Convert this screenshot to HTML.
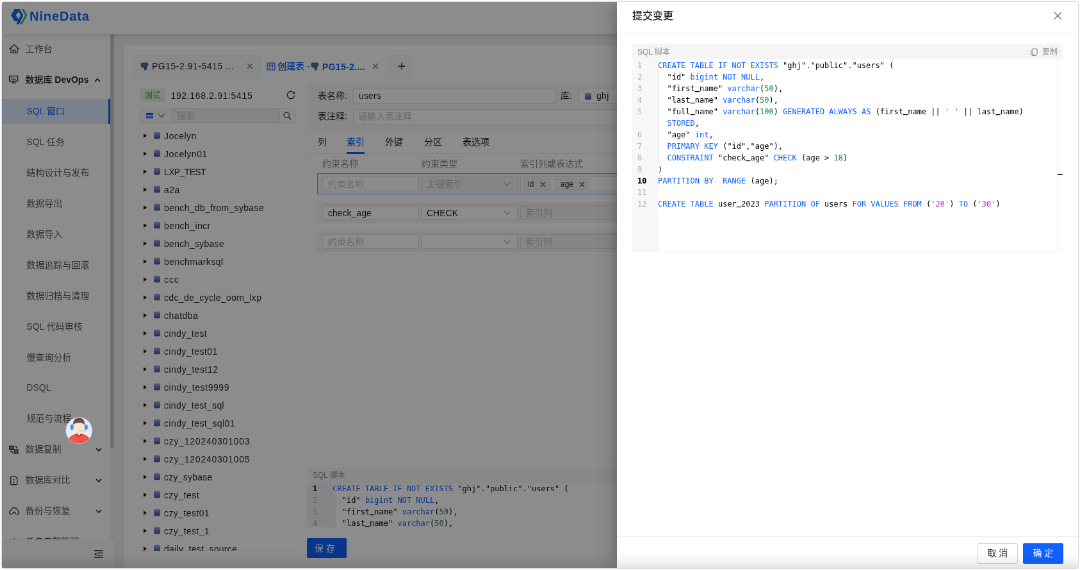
<!DOCTYPE html>
<html lang="zh-CN">
<head>
<meta charset="utf-8">
<title>NineData - 提交变更</title>
<style>
*{box-sizing:border-box;margin:0;padding:0}
html,body{width:1080px;height:570px;overflow:hidden;background:#fdfdfd}
body{font-family:"Liberation Sans","Noto Sans CJK SC",sans-serif;font-size:14px;color:rgba(0,0,0,.85);position:relative}
#frame{position:absolute;left:1px;top:1px;width:1078px;height:567.7px;border:1px solid #dedede;border-radius:2.5px;overflow:hidden;background:#fff}
#app{position:absolute;left:0;top:0;width:1680px;height:882px;transform:scale(.6405,.6413);transform-origin:0 0;will-change:transform;overflow:hidden;background:#eef0f4}
.abs{position:absolute}
#app div,#app span,#app svg{position:absolute;white-space:nowrap}
.t{line-height:22px;height:22px}
#app .i{position:static}
#app .u{position:relative;top:-1.7px;font-weight:bold}
/* header */
#hdr{left:0;top:0;width:1680px;height:50px;background:#fff;box-shadow:0 2px 8px rgba(0,0,0,.12);z-index:3}
/* sider */
#sider{left:0;top:50px;width:175px;height:832px;background:#fff;z-index:2}
.mi{left:37px;color:rgba(0,0,0,.65)}
.mi.b{font-weight:bold;color:rgba(0,0,0,.85)}
/* main */
#card{left:191px;top:68px;width:1489px;height:814px;background:#fff}
.row{left:221px}
#mask{left:0;top:0;width:1680px;height:882px;background:rgba(0,0,0,.45);z-index:10}
#drawer{left:960px;top:0;width:720px;height:882px;background:#fff;z-index:11;box-shadow:-6px 0 16px -8px rgba(0,0,0,.2),-9px 0 28px rgba(0,0,0,.14)}
#app .mono{font-family:"DejaVu Sans Mono","Liberation Mono",monospace;font-size:12px;line-height:18px;height:18px;color:#000;white-space:pre}
#app .mono span{white-space:inherit}
.k{color:#0f62fe}.n{color:#098658}.s{color:#d013d0}
.ln{color:#b0b0b0;text-align:right;width:30px}
</style>
</head>
<body>
<div id="frame">
<div id="app">
<div id="hdr">
<svg style="left:12px;top:8px" width="30" height="28" viewBox="12 8 30 28">
<path fill-rule="evenodd" d="M14 20.6 L19.5 11 L27.5 11 L33.2 20.6 L26.9 34.4 L22.3 34.4 L24.5 29.8 L19.3 29.8 Z M21.6 20.6 L23.6 17.2 L25.4 17.2 L24.6 15.6 L26.4 15 L29.2 20.6 L27.2 24.4 L26.4 26.4 L24.6 25.8 L25.2 24.4 L23.6 24.4 Z" fill="#1468fa"/>
<path d="M30.6 11 L33.8 11 L39.6 20.6 L31.4 34.4 L28.2 34.4 L36.2 20.6 Z" fill="#19c48a"/>
</svg>
<span style="left:43px;top:6.5px;font-size:20px;line-height:30px;font-weight:bold;color:#1468fa;letter-spacing:.9px">NineData</span>
<div style="left:59.1px;top:13.7px;width:3.7px;height:3px;background:#19c48a"></div>
</div>
<div id="sider">
<div style="left:0;top:101.3px;width:169px;height:39px;background:#dfeaff"></div>
<div style="left:166px;top:101.3px;width:3px;height:39px;background:#0f62fe"></div>
<span class="mi t" style="left:36.4px;top:12.1px">工作台</span>
<svg style="left:10.6px;top:15.0px" width="16" height="16" viewBox="0 0 16 16"><path d="M1 8 L8 1.5 L15 8 M3 6.8 V14.3 H13 V6.8 M6.3 14.3 V10 H9.7 V14.3" fill="none" stroke="#333" stroke-width="1.25" stroke-linejoin="round" stroke-linecap="round"/></svg>
<span class="mi t b" style="left:36.4px;top:60.1px"><span class="i" style="font-weight:500">数据库</span> DevOps</span>
<svg style="left:10.6px;top:63.05px" width="16" height="16" viewBox="0 0 16 16"><path d="M0.7 2.3 H13.5 V10.4 H0.7 Z M3.6 13.1 H10.6 M7.1 10.4 V13" fill="none" stroke="#222" stroke-width="1.35"/><path d="M3.6 4.8 V8 M5.4 5.2 H7.6 M5.4 7.6 H10.6 M9 5 V6.4" fill="none" stroke="#333" stroke-width="1"/></svg>
<span class="mi t" style="left:38.3px;top:109.4px;color:#0f62fe">SQL 窗口</span>
<span class="mi t" style="left:38.3px;top:157.29px">SQL 任务</span>
<span class="mi t" style="left:38.3px;top:205.18px">结构设计与发布</span>
<span class="mi t" style="left:38.3px;top:253.07px">数据导出</span>
<span class="mi t" style="left:38.3px;top:300.96px">数据导入</span>
<span class="mi t" style="left:38.3px;top:348.85px">数据追踪与回滚</span>
<span class="mi t" style="left:38.3px;top:396.74px">数据归档与清理</span>
<span class="mi t" style="left:38.3px;top:444.63px">SQL 代码审核</span>
<span class="mi t" style="left:38.3px;top:492.52px">慢查询分析</span>
<span class="mi t" style="left:38.3px;top:540.41px">DSQL</span>
<span class="mi t" style="left:38.3px;top:588.3px">规范与流程</span>
<span class="mi t" style="left:36.4px;top:636.19px">数据复制</span>
<svg style="left:10.6px;top:639.62px" width="16" height="16" viewBox="0 0 16 16"><path d="M0.8 2.4 H7 V7.4 H0.8 Z M8 8.2 H13.8 V13.8 H8 Z" fill="#8a8a8a" stroke="#2a2a2a" stroke-width="1.3"/><path d="M8.6 2.6 Q12.2 2.8 12.4 6.4 M2.2 9.6 L5.6 13.2" fill="none" stroke="#2a2a2a" stroke-width="1.4"/></svg>
<span class="mi t" style="left:36.4px;top:684.08px">数据库对比</span>
<svg style="left:10.6px;top:687.67px" width="16" height="16" viewBox="0 0 16 16"><path d="M2.6 3 Q2.6 1.8 3.8 1.8 H9.6 L12.6 4.6 V13.4 Q12.6 14.6 11.4 14.6 H3.8 Q2.6 14.6 2.6 13.4 Z M6.6 6.4 H8.4 M6.6 9.2 H8.4 M6.6 11.6 H8.4" fill="none" stroke="#2a2a2a" stroke-width="1.3" stroke-linejoin="round"/></svg>
<span class="mi t" style="left:36.4px;top:731.96px">备份与恢复</span>
<svg style="left:10.6px;top:735.72px" width="16" height="16" viewBox="0 0 16 16"><path d="M4.4 13 H3.8 A3.4 3.4 0 0 1 3 6.4 A5.2 5.2 0 0 1 13 6.4 A3.4 3.4 0 0 1 12.2 13 H11.6 M5.4 12 L8 9.2 L10.6 12" fill="none" stroke="#2a2a2a" stroke-width="1.3" stroke-linejoin="round"/></svg>
<span class="mi t" style="left:36.4px;top:779.85px">任务告警管理</span>
<svg style="left:10.6px;top:783.77px" width="16" height="16" viewBox="0 0 16 16"><path d="M3 13.5 H13 M4.5 13 V8.5 A3.5 3.5 0 0 1 11.5 8.5 V13 M8 2 V3.5 M2.5 4 L3.5 5 M13.5 4 L12.5 5" fill="none" stroke="#333" stroke-width="1.2"/></svg>
<svg style="left:144px;top:68px" width="10" height="8" viewBox="0 0 10 8"><path d="M1 6 L5 2 L9 6" fill="none" stroke="#222" stroke-width="1.6"/></svg>
<svg style="left:146px;top:644px" width="10" height="8" viewBox="0 0 10 8"><path d="M1 2 L5 6 L9 2" fill="none" stroke="#222" stroke-width="1.6"/></svg>
<svg style="left:146px;top:692px" width="10" height="8" viewBox="0 0 10 8"><path d="M1 2 L5 6 L9 2" fill="none" stroke="#222" stroke-width="1.6"/></svg>
<svg style="left:146px;top:740px" width="10" height="8" viewBox="0 0 10 8"><path d="M1 2 L5 6 L9 2" fill="none" stroke="#222" stroke-width="1.6"/></svg>
<div style="left:169px;top:0;width:6px;height:832px;background:#f1f1f1"></div>
<div style="left:169px;top:0;width:6px;height:646px;background:#c9c9c9;border-radius:3px"></div>
<div style="left:0;top:788px;width:175px;height:44px;background:#fafafa;border-top:1px solid #ececec"></div>
<svg style="left:142.6px;top:803.5px" width="15.5" height="14" viewBox="0 0 16 14"><path d="M1 1.5 H15 M6 5 H15 M6 9 H15 M1 12.5 H15" stroke="#222" stroke-width="1.3" fill="none"/><path d="M4.5 4.5 L1.5 7 L4.5 9.5 Z" fill="#222"/></svg>
</div>
<div id="card"></div>
<svg style="left:0;top:0" width="0" height="0"><defs><linearGradient id="dbg" x1="0" y1="0" x2="0" y2="1"><stop offset="0" stop-color="#a3b5e6"/><stop offset=".3" stop-color="#7d93d0"/><stop offset="1" stop-color="#3f5499"/></linearGradient></defs></svg>
<div style="left:207px;top:83px;width:197px;height:36px;background:#f9f9f9;border:1px solid #f4f4f4"></div>
<span class="t" style="left:234px;top:89.3px;letter-spacing:.5px">PG15-2.91-5415 ...</span>
<span class="t" style="left:430.3px;top:89.3px;color:#0f62fe;font-weight:500">创建表 - </span>
<span class="t" style="left:500px;top:90px;color:#0f62fe;font-weight:bold;letter-spacing:.3px">PG15-2....</span>
<div style="left:600px;top:83px;width:42px;height:36px;background:#f9f9f9;border:1px solid #f4f4f4"></div>
<svg style="left:215.6px;top:93.6px" width="13" height="13" viewBox="0 0 13 13"><path d="M0.6 2.2 Q0.6 0.4 3 0.4 H9.6 Q12.4 0.4 12.4 3 Q12.4 5.6 10.4 6.6 L9.6 11.2 Q9.4 12.4 8.2 12.4 H7 Q6 12.4 6 11.2 V8.4 H3.6 Q1.6 8.4 1.2 6.4 Z" fill="#336791"/><path d="M3 3 V5.4 M5.2 2.6 H7.4 V4.6 H5.2 M9.2 2.6 H10.6" stroke="#8fb0cc" stroke-width=".7" fill="none"/></svg>
<svg style="left:482px;top:93.6px" width="13" height="13" viewBox="0 0 13 13"><path d="M0.6 2.2 Q0.6 0.4 3 0.4 H9.6 Q12.4 0.4 12.4 3 Q12.4 5.6 10.4 6.6 L9.6 11.2 Q9.4 12.4 8.2 12.4 H7 Q6 12.4 6 11.2 V8.4 H3.6 Q1.6 8.4 1.2 6.4 Z" fill="#336791"/><path d="M3 3 V5.4 M5.2 2.6 H7.4 V4.6 H5.2 M9.2 2.6 H10.6" stroke="#8fb0cc" stroke-width=".7" fill="none"/></svg>
<svg style="left:382px;top:94.6px" width="10" height="10" viewBox="0 0 10 10"><path d="M1 1 L9 9 M9 1 L1 9" stroke="#777" stroke-width="1.15" fill="none"/></svg>
<svg style="left:578px;top:94.6px" width="10" height="10" viewBox="0 0 10 10"><path d="M1 1 L9 9 M9 1 L1 9" stroke="#777" stroke-width="1.15" fill="none"/></svg>
<svg style="left:618px;top:94px" width="12" height="12" viewBox="0 0 12 12"><path d="M6 0.5 V11.5 M0.5 6 H11.5" stroke="#222" stroke-width="1.3"/></svg>
<svg style="left:412.5px;top:93.5px" width="14" height="13" viewBox="0 0 14 13"><path d="M1 1 H13 V12 H1 Z M1 4.5 H13 M5 1 V12 M9 1 V12" fill="none" stroke="#0f62fe" stroke-width="1.2"/></svg>
<div style="left:207px;top:126px;width:260px;height:730px;background:#fff;border:1px solid #f0f0f0"></div>
<div style="left:215px;top:135px;width:39.5px;height:21px;background:#e6f6e0;border-radius:2px"></div>
<span style="left:222.7px;top:136.3px;font-size:12px;line-height:20px;color:#3c9e3c">测试</span>
<span class="t" style="left:263.5px;top:134.5px;letter-spacing:.65px">192.168.2.91:5415</span>
<svg style="left:444px;top:138px" width="14" height="14" viewBox="0 0 14 14"><path d="M11.6 3.6 A5.7 5.7 0 1 0 12.7 7.6" fill="none" stroke="#333" stroke-width="1.25"/><path d="M12.4 1.8 V4.4 H9.8" fill="none" stroke="#333" stroke-width="1.1"/></svg>
<div style="left:214.5px;top:164.5px;width:52.5px;height:24px;background:#fafafa;border:1px solid #e0e0e0;border-radius:2px 0 0 2px"></div>
<div style="left:266px;top:164.5px;width:168px;height:24px;background:#f3f3f3;border:1px solid #e0e0e0"></div>
<div style="left:433px;top:164.5px;width:25px;height:24px;background:#fafafa;border:1px solid #e0e0e0;border-radius:0 2px 2px 0"></div>
<svg style="left:225px;top:171.5px" width="11" height="10.4" viewBox="0 0 13 12" preserveAspectRatio="none"><path d="M0 1 H13 V5 H0 Z" fill="#2a62e8"/><path d="M0 7 H13 V11 H0 Z" fill="#4c86ff"/></svg>
<svg style="left:243px;top:172.5px" width="12" height="8" viewBox="0 0 12 8"><path d="M1 1 L6 6.5 L11 1" fill="none" stroke="#888" stroke-width="1.2"/></svg>
<span class="t" style="left:273.2px;top:165.5px;color:#bfbfbf">搜索</span>
<svg style="left:439px;top:170.5px" width="13" height="13" viewBox="0 0 13 13"><circle cx="5.3" cy="5.3" r="4.2" fill="none" stroke="#555" stroke-width="1.3"/><path d="M8.4 8.4 L12.2 12.2" stroke="#555" stroke-width="1.5"/></svg>
<div style="left:207px;top:190px;width:260px;height:666px;overflow:hidden">
<svg style="left:13.7px;top:14.8px" width="5" height="7.2" viewBox="0 0 6 8"><path d="M0 0 L6 4 L0 8 Z" fill="#111"/></svg>
<svg style="left:30px;top:12.3px" width="10" height="12" viewBox="0 0 10 12"><path d="M0 1.6 Q5 -0.6 10 1.6 V10.4 Q5 12.6 0 10.4 Z" fill="url(#dbg)"/></svg>
<span class="t tr" style="left:46px;top:7.9px;letter-spacing:0.47px">Jocelyn</span>
<svg style="left:13.7px;top:42.8px" width="5" height="7.2" viewBox="0 0 6 8"><path d="M0 0 L6 4 L0 8 Z" fill="#111"/></svg>
<svg style="left:30px;top:40.3px" width="10" height="12" viewBox="0 0 10 12"><path d="M0 1.6 Q5 -0.6 10 1.6 V10.4 Q5 12.6 0 10.4 Z" fill="url(#dbg)"/></svg>
<span class="t tr" style="left:46px;top:35.9px;letter-spacing:0.53px">Jocelyn01</span>
<svg style="left:13.7px;top:70.8px" width="5" height="7.2" viewBox="0 0 6 8"><path d="M0 0 L6 4 L0 8 Z" fill="#111"/></svg>
<svg style="left:30px;top:68.3px" width="10" height="12" viewBox="0 0 10 12"><path d="M0 1.6 Q5 -0.6 10 1.6 V10.4 Q5 12.6 0 10.4 Z" fill="url(#dbg)"/></svg>
<span class="t tr" style="left:46px;top:63.9px;letter-spacing:-0.63px">LXP_TEST</span>
<svg style="left:13.7px;top:98.8px" width="5" height="7.2" viewBox="0 0 6 8"><path d="M0 0 L6 4 L0 8 Z" fill="#111"/></svg>
<svg style="left:30px;top:96.3px" width="10" height="12" viewBox="0 0 10 12"><path d="M0 1.6 Q5 -0.6 10 1.6 V10.4 Q5 12.6 0 10.4 Z" fill="url(#dbg)"/></svg>
<span class="t tr" style="left:46px;top:91.9px;letter-spacing:0.35px">a2a</span>
<svg style="left:13.7px;top:126.8px" width="5" height="7.2" viewBox="0 0 6 8"><path d="M0 0 L6 4 L0 8 Z" fill="#111"/></svg>
<svg style="left:30px;top:124.3px" width="10" height="12" viewBox="0 0 10 12"><path d="M0 1.6 Q5 -0.6 10 1.6 V10.4 Q5 12.6 0 10.4 Z" fill="url(#dbg)"/></svg>
<span class="t tr" style="left:46px;top:119.9px;letter-spacing:0.32px">bench_db_from_sybase</span>
<svg style="left:13.7px;top:154.8px" width="5" height="7.2" viewBox="0 0 6 8"><path d="M0 0 L6 4 L0 8 Z" fill="#111"/></svg>
<svg style="left:30px;top:152.3px" width="10" height="12" viewBox="0 0 10 12"><path d="M0 1.6 Q5 -0.6 10 1.6 V10.4 Q5 12.6 0 10.4 Z" fill="url(#dbg)"/></svg>
<span class="t tr" style="left:46px;top:147.9px;letter-spacing:0.41px">bench_incr</span>
<svg style="left:13.7px;top:182.8px" width="5" height="7.2" viewBox="0 0 6 8"><path d="M0 0 L6 4 L0 8 Z" fill="#111"/></svg>
<svg style="left:30px;top:180.3px" width="10" height="12" viewBox="0 0 10 12"><path d="M0 1.6 Q5 -0.6 10 1.6 V10.4 Q5 12.6 0 10.4 Z" fill="url(#dbg)"/></svg>
<span class="t tr" style="left:46px;top:175.9px;letter-spacing:0.31px">bench_sybase</span>
<svg style="left:13.7px;top:210.8px" width="5" height="7.2" viewBox="0 0 6 8"><path d="M0 0 L6 4 L0 8 Z" fill="#111"/></svg>
<svg style="left:30px;top:208.3px" width="10" height="12" viewBox="0 0 10 12"><path d="M0 1.6 Q5 -0.6 10 1.6 V10.4 Q5 12.6 0 10.4 Z" fill="url(#dbg)"/></svg>
<span class="t tr" style="left:46px;top:203.9px;letter-spacing:0.44px">benchmarksql</span>
<svg style="left:13.7px;top:238.8px" width="5" height="7.2" viewBox="0 0 6 8"><path d="M0 0 L6 4 L0 8 Z" fill="#111"/></svg>
<svg style="left:30px;top:236.3px" width="10" height="12" viewBox="0 0 10 12"><path d="M0 1.6 Q5 -0.6 10 1.6 V10.4 Q5 12.6 0 10.4 Z" fill="url(#dbg)"/></svg>
<span class="t tr" style="left:46px;top:231.9px;letter-spacing:1.06px">ccc</span>
<svg style="left:13.7px;top:266.8px" width="5" height="7.2" viewBox="0 0 6 8"><path d="M0 0 L6 4 L0 8 Z" fill="#111"/></svg>
<svg style="left:30px;top:264.3px" width="10" height="12" viewBox="0 0 10 12"><path d="M0 1.6 Q5 -0.6 10 1.6 V10.4 Q5 12.6 0 10.4 Z" fill="url(#dbg)"/></svg>
<span class="t tr" style="left:46px;top:259.9px;letter-spacing:0.34px">cdc_de_cycle_oom_lxp</span>
<svg style="left:13.7px;top:294.8px" width="5" height="7.2" viewBox="0 0 6 8"><path d="M0 0 L6 4 L0 8 Z" fill="#111"/></svg>
<svg style="left:30px;top:292.3px" width="10" height="12" viewBox="0 0 10 12"><path d="M0 1.6 Q5 -0.6 10 1.6 V10.4 Q5 12.6 0 10.4 Z" fill="url(#dbg)"/></svg>
<span class="t tr" style="left:46px;top:287.9px;letter-spacing:0.52px">chatdba</span>
<svg style="left:13.7px;top:322.8px" width="5" height="7.2" viewBox="0 0 6 8"><path d="M0 0 L6 4 L0 8 Z" fill="#111"/></svg>
<svg style="left:30px;top:320.3px" width="10" height="12" viewBox="0 0 10 12"><path d="M0 1.6 Q5 -0.6 10 1.6 V10.4 Q5 12.6 0 10.4 Z" fill="url(#dbg)"/></svg>
<span class="t tr" style="left:46px;top:315.9px;letter-spacing:0.39px">cindy_test</span>
<svg style="left:13.7px;top:350.8px" width="5" height="7.2" viewBox="0 0 6 8"><path d="M0 0 L6 4 L0 8 Z" fill="#111"/></svg>
<svg style="left:30px;top:348.3px" width="10" height="12" viewBox="0 0 10 12"><path d="M0 1.6 Q5 -0.6 10 1.6 V10.4 Q5 12.6 0 10.4 Z" fill="url(#dbg)"/></svg>
<span class="t tr" style="left:46px;top:343.9px;letter-spacing:0.42px">cindy_test01</span>
<svg style="left:13.7px;top:378.8px" width="5" height="7.2" viewBox="0 0 6 8"><path d="M0 0 L6 4 L0 8 Z" fill="#111"/></svg>
<svg style="left:30px;top:376.3px" width="10" height="12" viewBox="0 0 10 12"><path d="M0 1.6 Q5 -0.6 10 1.6 V10.4 Q5 12.6 0 10.4 Z" fill="url(#dbg)"/></svg>
<span class="t tr" style="left:46px;top:371.9px;letter-spacing:0.49px">cindy_test12</span>
<svg style="left:13.7px;top:406.8px" width="5" height="7.2" viewBox="0 0 6 8"><path d="M0 0 L6 4 L0 8 Z" fill="#111"/></svg>
<svg style="left:30px;top:404.3px" width="10" height="12" viewBox="0 0 10 12"><path d="M0 1.6 Q5 -0.6 10 1.6 V10.4 Q5 12.6 0 10.4 Z" fill="url(#dbg)"/></svg>
<span class="t tr" style="left:46px;top:399.9px;letter-spacing:0.56px">cindy_test9999</span>
<svg style="left:13.7px;top:434.8px" width="5" height="7.2" viewBox="0 0 6 8"><path d="M0 0 L6 4 L0 8 Z" fill="#111"/></svg>
<svg style="left:30px;top:432.3px" width="10" height="12" viewBox="0 0 10 12"><path d="M0 1.6 Q5 -0.6 10 1.6 V10.4 Q5 12.6 0 10.4 Z" fill="url(#dbg)"/></svg>
<span class="t tr" style="left:46px;top:427.9px;letter-spacing:0.38px">cindy_test_sql</span>
<svg style="left:13.7px;top:462.8px" width="5" height="7.2" viewBox="0 0 6 8"><path d="M0 0 L6 4 L0 8 Z" fill="#111"/></svg>
<svg style="left:30px;top:460.3px" width="10" height="12" viewBox="0 0 10 12"><path d="M0 1.6 Q5 -0.6 10 1.6 V10.4 Q5 12.6 0 10.4 Z" fill="url(#dbg)"/></svg>
<span class="t tr" style="left:46px;top:455.9px;letter-spacing:0.41px">cindy_test_sql01</span>
<svg style="left:13.7px;top:490.8px" width="5" height="7.2" viewBox="0 0 6 8"><path d="M0 0 L6 4 L0 8 Z" fill="#111"/></svg>
<svg style="left:30px;top:488.3px" width="10" height="12" viewBox="0 0 10 12"><path d="M0 1.6 Q5 -0.6 10 1.6 V10.4 Q5 12.6 0 10.4 Z" fill="url(#dbg)"/></svg>
<span class="t tr" style="left:46px;top:483.9px;letter-spacing:0.75px">czy_120240301003</span>
<svg style="left:13.7px;top:518.8px" width="5" height="7.2" viewBox="0 0 6 8"><path d="M0 0 L6 4 L0 8 Z" fill="#111"/></svg>
<svg style="left:30px;top:516.3px" width="10" height="12" viewBox="0 0 10 12"><path d="M0 1.6 Q5 -0.6 10 1.6 V10.4 Q5 12.6 0 10.4 Z" fill="url(#dbg)"/></svg>
<span class="t tr" style="left:46px;top:511.9px;letter-spacing:0.75px">czy_120240301005</span>
<svg style="left:13.7px;top:546.8px" width="5" height="7.2" viewBox="0 0 6 8"><path d="M0 0 L6 4 L0 8 Z" fill="#111"/></svg>
<svg style="left:30px;top:544.3px" width="10" height="12" viewBox="0 0 10 12"><path d="M0 1.6 Q5 -0.6 10 1.6 V10.4 Q5 12.6 0 10.4 Z" fill="url(#dbg)"/></svg>
<span class="t tr" style="left:46px;top:539.9px;letter-spacing:0.24px">czy_sybase</span>
<svg style="left:13.7px;top:574.8px" width="5" height="7.2" viewBox="0 0 6 8"><path d="M0 0 L6 4 L0 8 Z" fill="#111"/></svg>
<svg style="left:30px;top:572.3px" width="10" height="12" viewBox="0 0 10 12"><path d="M0 1.6 Q5 -0.6 10 1.6 V10.4 Q5 12.6 0 10.4 Z" fill="url(#dbg)"/></svg>
<span class="t tr" style="left:46px;top:567.9px;letter-spacing:0.47px">czy_test</span>
<svg style="left:13.7px;top:602.8px" width="5" height="7.2" viewBox="0 0 6 8"><path d="M0 0 L6 4 L0 8 Z" fill="#111"/></svg>
<svg style="left:30px;top:600.3px" width="10" height="12" viewBox="0 0 10 12"><path d="M0 1.6 Q5 -0.6 10 1.6 V10.4 Q5 12.6 0 10.4 Z" fill="url(#dbg)"/></svg>
<span class="t tr" style="left:46px;top:595.9px;letter-spacing:0.41px">czy_test01</span>
<svg style="left:13.7px;top:630.8px" width="5" height="7.2" viewBox="0 0 6 8"><path d="M0 0 L6 4 L0 8 Z" fill="#111"/></svg>
<svg style="left:30px;top:628.3px" width="10" height="12" viewBox="0 0 10 12"><path d="M0 1.6 Q5 -0.6 10 1.6 V10.4 Q5 12.6 0 10.4 Z" fill="url(#dbg)"/></svg>
<span class="t tr" style="left:46px;top:623.9px;letter-spacing:0.41px">czy_test_1</span>
<svg style="left:13.7px;top:658.8px" width="5" height="7.2" viewBox="0 0 6 8"><path d="M0 0 L6 4 L0 8 Z" fill="#111"/></svg>
<svg style="left:30px;top:656.3px" width="10" height="12" viewBox="0 0 10 12"><path d="M0 1.6 Q5 -0.6 10 1.6 V10.4 Q5 12.6 0 10.4 Z" fill="url(#dbg)"/></svg>
<span class="t tr" style="left:46px;top:651.9px;letter-spacing:0.31px">daily_test_source</span>
</div>
<div style="left:477px;top:126px;width:1203px;height:590px;background:#fff;border:1px solid #f5f5f5"></div>
<div style="left:477px;top:126px;width:1203px;height:74px;background:#f7f7f7"></div>
<span class="t" style="left:493px;top:134.8px">表名称:</span>
<div style="left:548px;top:135px;width:316px;height:24px;background:#fff;border:1px solid #e0e0e0;border-radius:2px"></div>
<span class="t" style="left:557px;top:134.8px;letter-spacing:.15px">users</span>
<span class="t" style="left:872px;top:134.8px">库:</span>
<div style="left:900px;top:135px;width:400px;height:24px;background:#fff;border:1px solid #e0e0e0;border-radius:2px"></div>
<svg style="left:910px;top:140.6px" width="10" height="12" viewBox="0 0 10 12"><path d="M0 1.6 Q5 -0.6 10 1.6 V10.4 Q5 12.6 0 10.4 Z" fill="url(#dbg)"/></svg>
<span class="t" style="left:928px;top:134.8px;letter-spacing:.3px">ghj</span>
<span class="t" style="left:493px;top:166.8px">表注释:</span>
<div style="left:548px;top:167px;width:1000px;height:24px;background:#fff;border:1px solid #e0e0e0;border-radius:2px"></div>
<span class="t" style="left:556px;top:166.8px;color:#bfbfbf">请输入表注释</span>
<span class="t" style="left:493px;top:206.8px">列</span>
<span class="t" style="left:538px;top:206.8px;color:#0f62fe;font-weight:500">索引</span>
<span class="t" style="left:598px;top:206.8px">外键</span>
<span class="t" style="left:659px;top:206.8px">分区</span>
<span class="t" style="left:719px;top:206.8px">表选项</span>
<div style="left:477px;top:236px;width:1203px;height:1px;background:#efefef"></div>
<div style="left:538px;top:234px;width:28px;height:3px;background:#0f62fe"></div>
<span class="t" style="left:500px;top:241px;color:rgba(0,0,0,.45)">约束名称</span>
<span class="t" style="left:655px;top:241px;color:rgba(0,0,0,.45)">约束类型</span>
<span class="t" style="left:809px;top:241px;color:rgba(0,0,0,.45)">索引列或表达式</span>
<div style="left:492px;top:267px;width:1188px;height:33px;background:#f0f6ff;border:1px solid #6ea0ff"></div>
<div style="left:501px;top:272px;width:150px;height:23px;background:#fff;border:1px solid #e0e0e0;border-radius:2px"></div>
<span class="t" style="left:509px;top:273px;color:#bfbfbf">约束名称</span>
<div style="left:655px;top:272px;width:150px;height:23px;background:#f5f5f5;border:1px solid #e0e0e0;border-radius:2px"></div>
<span class="t" style="left:663px;top:273px;color:#b8b8b8">主键索引</span>
<svg style="left:783px;top:280px" width="12" height="8" viewBox="0 0 12 8"><path d="M1 1 L6 6.5 L11 1" fill="none" stroke="#b0b0b0" stroke-width="1.2"/></svg>
<div style="left:809px;top:272px;width:871px;height:23px;background:#fff;border:1px solid #e0e0e0;border-radius:2px"></div>
<div style="left:813px;top:275px;width:44px;height:18px;background:#f5f5f5;border:1px solid #e8e8e8;border-radius:2px"></div>
<span style="left:821px;top:275px;font-size:12px;line-height:18px">id</span>
<svg style="left:839.5px;top:279.5px" width="9" height="9" viewBox="0 0 10 10"><path d="M1 1 L9 9 M9 1 L1 9" stroke="#333" stroke-width="1.3" fill="none"/></svg>
<div style="left:864px;top:275px;width:53px;height:18px;background:#f5f5f5;border:1px solid #e8e8e8;border-radius:2px"></div>
<span style="left:872px;top:275px;font-size:12px;line-height:18px">age</span>
<svg style="left:900.5px;top:279.5px" width="9" height="9" viewBox="0 0 10 10"><path d="M1 1 L9 9 M9 1 L1 9" stroke="#333" stroke-width="1.3" fill="none"/></svg>
<div style="left:492px;top:312px;width:1188px;height:33px;background:#f5f6f8"></div>
<div style="left:501px;top:317px;width:150px;height:23px;background:#fff;border:1px solid #e0e0e0;border-radius:2px"></div>
<span class="t" style="left:509px;top:318px;color:rgba(0,0,0,.85)">check_age</span>
<div style="left:655px;top:317px;width:150px;height:23px;background:#fff;border:1px solid #e0e0e0;border-radius:2px"></div>
<span class="t" style="left:663px;top:318px;color:rgba(0,0,0,.85)">CHECK</span>
<svg style="left:783px;top:325px" width="12" height="8" viewBox="0 0 12 8"><path d="M1 1 L6 6.5 L11 1" fill="none" stroke="#b5b5b5" stroke-width="1.2"/></svg>
<div style="left:809px;top:317px;width:871px;height:23px;background:#f5f5f5;border:1px solid #e0e0e0;border-radius:2px"></div>
<span class="t" style="left:817px;top:318px;color:#bfbfbf">索引列</span>
<div style="left:492px;top:357px;width:1188px;height:33px;background:#f5f6f8"></div>
<div style="left:501px;top:362px;width:150px;height:23px;background:#fff;border:1px solid #e0e0e0;border-radius:2px"></div>
<span class="t" style="left:509px;top:363px;color:#bfbfbf">约束名称</span>
<div style="left:655px;top:362px;width:150px;height:23px;background:#fff;border:1px solid #e0e0e0;border-radius:2px"></div>
<svg style="left:783px;top:370px" width="12" height="8" viewBox="0 0 12 8"><path d="M1 1 L6 6.5 L11 1" fill="none" stroke="#b5b5b5" stroke-width="1.2"/></svg>
<div style="left:809px;top:362px;width:871px;height:23px;background:#f5f5f5;border:1px solid #e0e0e0;border-radius:2px"></div>
<span class="t" style="left:817px;top:363px;color:#bfbfbf">索引列</span>
<div style="left:477px;top:726px;width:1203px;height:93px;background:#fff"></div>
<div style="left:477px;top:726.5px;width:1203px;height:24.5px;background:#f8f8f8"></div>
<div style="left:477px;top:751px;width:40px;height:68px;background:#f2f2f2"></div>
<span style="left:485px;top:729px;font-size:12px;line-height:18px;color:rgba(0,0,0,.45)">SQL 脚本</span>
<div style="left:477px;top:749px;width:1203px;height:71.5px;overflow:hidden">
<span class="mono" style="left:8px;top:0.8px;color:#000;font-weight:bold">1</span>
<span class="mono" style="left:39.3px;top:0.8px"><span class="k" style="position:static">CREATE TABLE IF NOT EXISTS</span> "ghj"."public"."users" (</span>
<span class="mono" style="left:8px;top:18.8px;color:#b0b0b0">2</span>
<span class="mono" style="left:39.3px;top:18.8px">  "id" <span class="k" style="position:static">bigint NOT NULL</span>,</span>
<span class="mono" style="left:8px;top:36.8px;color:#b0b0b0">3</span>
<span class="mono" style="left:39.3px;top:36.8px">  "first<span class="u">_</span>name" <span class="k" style="position:static">varchar</span>(<span class="n" style="position:static">50</span>),</span>
<span class="mono" style="left:8px;top:54.8px;color:#b0b0b0">4</span>
<span class="mono" style="left:39.3px;top:54.8px">  "last<span class="u">_</span>name" <span class="k" style="position:static">varchar</span>(<span class="n" style="position:static">50</span>),</span>
<div style="left:40.5px;top:20px;width:1.3px;height:60px;background:#b8b8b8"></div>
</div>
<div style="left:476px;top:835.8px;width:62px;height:31.5px;background:#0f62fe;border-radius:2px"></div>
<span class="t" style="left:488px;top:840.5px;color:#fff;letter-spacing:0">保 存</span>
<div id="mask"></div>
<svg style="left:99.2px;top:646.6px;z-index:12" width="42.4" height="42.4" viewBox="-0.5 -0.5 43 43">
<defs><clipPath id="avc"><circle cx="21" cy="21" r="20.6"/></clipPath></defs>
<circle cx="21" cy="21" r="21.4" fill="#c9d3df" fill-opacity=".55"/><circle cx="21" cy="21" r="20.6" fill="#e4ecf6"/>
<g clip-path="url(#avc)">
<ellipse cx="21.2" cy="36" rx="16.7" ry="9.8" fill="#ef5350"/>
<path d="M14.6 27.2 L21 31.5 L27.2 27.2 L24 25.5 L18 25.5 Z" fill="#c62f2b"/>
<path d="M18 22 H24 V26 L21 29.4 L18 26 Z" fill="#fbdcb8"/>
<ellipse cx="20.7" cy="15.4" rx="8.6" ry="7.9" fill="#fde6c8"/>
<path d="M11.7 12.4 Q11.2 1 20.8 1 Q30.4 1 29.9 12.4 Q26.5 8.2 20.8 8.8 Q15.4 8.2 11.7 12.4 Z" fill="#6d4c41"/>
<ellipse cx="9.8" cy="15.8" rx="2.6" ry="4.3" fill="#3d8bfd"/>
<ellipse cx="32.2" cy="15.8" rx="2.6" ry="4.3" fill="#3d8bfd"/>
<path d="M20.4 21.4 L31 21.9 L32 19.5" fill="none" stroke="#b4bcc8" stroke-width="1"/>
</g></svg>
<div id="drawer">
<span style="left:24px;top:11.4px;font-size:16px;line-height:22px;font-weight:500;color:rgba(0,0,0,.88)">提交变更</span>
<svg style="left:682.3px;top:15.2px" width="12.6" height="12.6" viewBox="0 0 14 14"><path d="M1 1 L13 13 M13 1 L1 13" stroke="#777" stroke-width="1.5" fill="none"/></svg>
<div style="left:0;top:49px;width:720px;height:1px;background:#efefef"></div>
<div style="left:24px;top:65px;width:672px;height:24px;background:#f5f5f5"></div>
<span style="left:32px;top:69.3px;font-size:12px;line-height:18px;color:rgba(0,0,0,.45)">SQL 脚本</span>
<svg style="left:646px;top:72.3px" width="11" height="12" viewBox="0 0 11 12"><path d="M3 1 H10 V9.5 L7.5 11.5 H3 Z" fill="none" stroke="#888" stroke-width="1.1"/><path d="M1 3 V10.5 H6" fill="none" stroke="#888" stroke-width="1.1"/></svg>
<span style="left:664px;top:69.3px;font-size:12px;line-height:18px;color:rgba(0,0,0,.45)">复制</span>
<div style="left:24px;top:89px;width:672px;height:301px;background:#fff;border-bottom:1px solid #f0f0f0"></div>
<div style="left:24px;top:89px;width:40px;height:300px;background:#f7f7f7"></div>
<div style="left:688px;top:89px;width:8px;height:300px;border-left:1px solid #e8e8e8"></div>
<div style="left:688px;top:268px;width:8px;height:2px;background:#333"></div>
<span class="mono" style="left:32px;top:90px;color:#b0b0b0">1</span>
<span class="mono" style="left:64px;top:90px"><span class="k" style="position:static">CREATE TABLE IF NOT EXISTS</span> "ghj"."public"."users" (</span>
<span class="mono" style="left:32px;top:108px;color:#b0b0b0">2</span>
<span class="mono" style="left:64px;top:108px">  "id" <span class="k" style="position:static">bigint NOT NULL</span>,</span>
<span class="mono" style="left:32px;top:126px;color:#b0b0b0">3</span>
<span class="mono" style="left:64px;top:126px">  "first<span class="u">_</span>name" <span class="k" style="position:static">varchar</span>(<span class="n" style="position:static">50</span>),</span>
<span class="mono" style="left:32px;top:144px;color:#b0b0b0">4</span>
<span class="mono" style="left:64px;top:144px">  "last<span class="u">_</span>name" <span class="k" style="position:static">varchar</span>(<span class="n" style="position:static">50</span>),</span>
<span class="mono" style="left:32px;top:162px;color:#b0b0b0">5</span>
<span class="mono" style="left:64px;top:162px">  "full<span class="u">_</span>name" <span class="k" style="position:static">varchar</span>(<span class="n" style="position:static">100</span>) <span class="k" style="position:static">GENERATED ALWAYS AS</span> (first<span class="u">_</span>name || <span class="s" style="position:static">' '</span> || last<span class="u">_</span>name)</span>
<span class="mono" style="left:64px;top:180px">  <span class="k" style="position:static">STORED</span>,</span>
<span class="mono" style="left:32px;top:198px;color:#b0b0b0">6</span>
<span class="mono" style="left:64px;top:198px">  "age" <span class="k" style="position:static">int</span>,</span>
<span class="mono" style="left:32px;top:216px;color:#b0b0b0">7</span>
<span class="mono" style="left:64px;top:216px">  <span class="k" style="position:static">PRIMARY KEY</span> ("id","age"),</span>
<span class="mono" style="left:32px;top:234px;color:#b0b0b0">8</span>
<span class="mono" style="left:64px;top:234px">  <span class="k" style="position:static">CONSTRAINT</span> "check<span class="u">_</span>age" <span class="k" style="position:static">CHECK</span> (age &gt; <span class="n" style="position:static">18</span>)</span>
<span class="mono" style="left:32px;top:252px;color:#b0b0b0">9</span>
<span class="mono" style="left:64px;top:252px">)</span>
<span class="mono" style="left:32px;top:270px;color:#000;font-weight:bold">10</span>
<span class="mono" style="left:64px;top:270px"><span class="k" style="position:static">PARTITION BY  RANGE</span> (age);</span>
<span class="mono" style="left:32px;top:288px;color:#b0b0b0">11</span>
<span class="mono" style="left:32px;top:306px;color:#b0b0b0">12</span>
<span class="mono" style="left:64px;top:306px"><span class="k" style="position:static">CREATE TABLE</span> user<span class="u">_</span>2023 <span class="k" style="position:static">PARTITION OF</span> users <span class="k" style="position:static">FOR VALUES FROM</span> (<span class="s" style="position:static">'20'</span>) <span class="k" style="position:static">TO</span> (<span class="s" style="position:static">'30'</span>)</span>
<div style="left:64.6px;top:108px;width:1.5px;height:144px;background:#cfcfcf"></div>
<div style="left:0;top:833px;width:720px;height:1px;background:#f0f0f0"></div>
<div style="left:563px;top:844.2px;width:63px;height:32px;background:#fff;border:1px solid #d4d4d4;border-radius:2px"></div>
<span class="t" style="left:578.4px;top:848.3px">取 消</span>
<div style="left:634px;top:844.2px;width:63px;height:32px;background:#0f62fe;border-radius:2px"></div>
<span class="t" style="left:649.4px;top:848.3px;color:#fff">确 定</span>
</div>
<div style="left:0;top:858px;width:1680px;height:24px;z-index:30;background:linear-gradient(to bottom,rgba(0,0,0,0),rgba(0,0,0,.035) 50%,rgba(0,0,0,.1))"></div>
</div>
</div>
</body>
</html>
